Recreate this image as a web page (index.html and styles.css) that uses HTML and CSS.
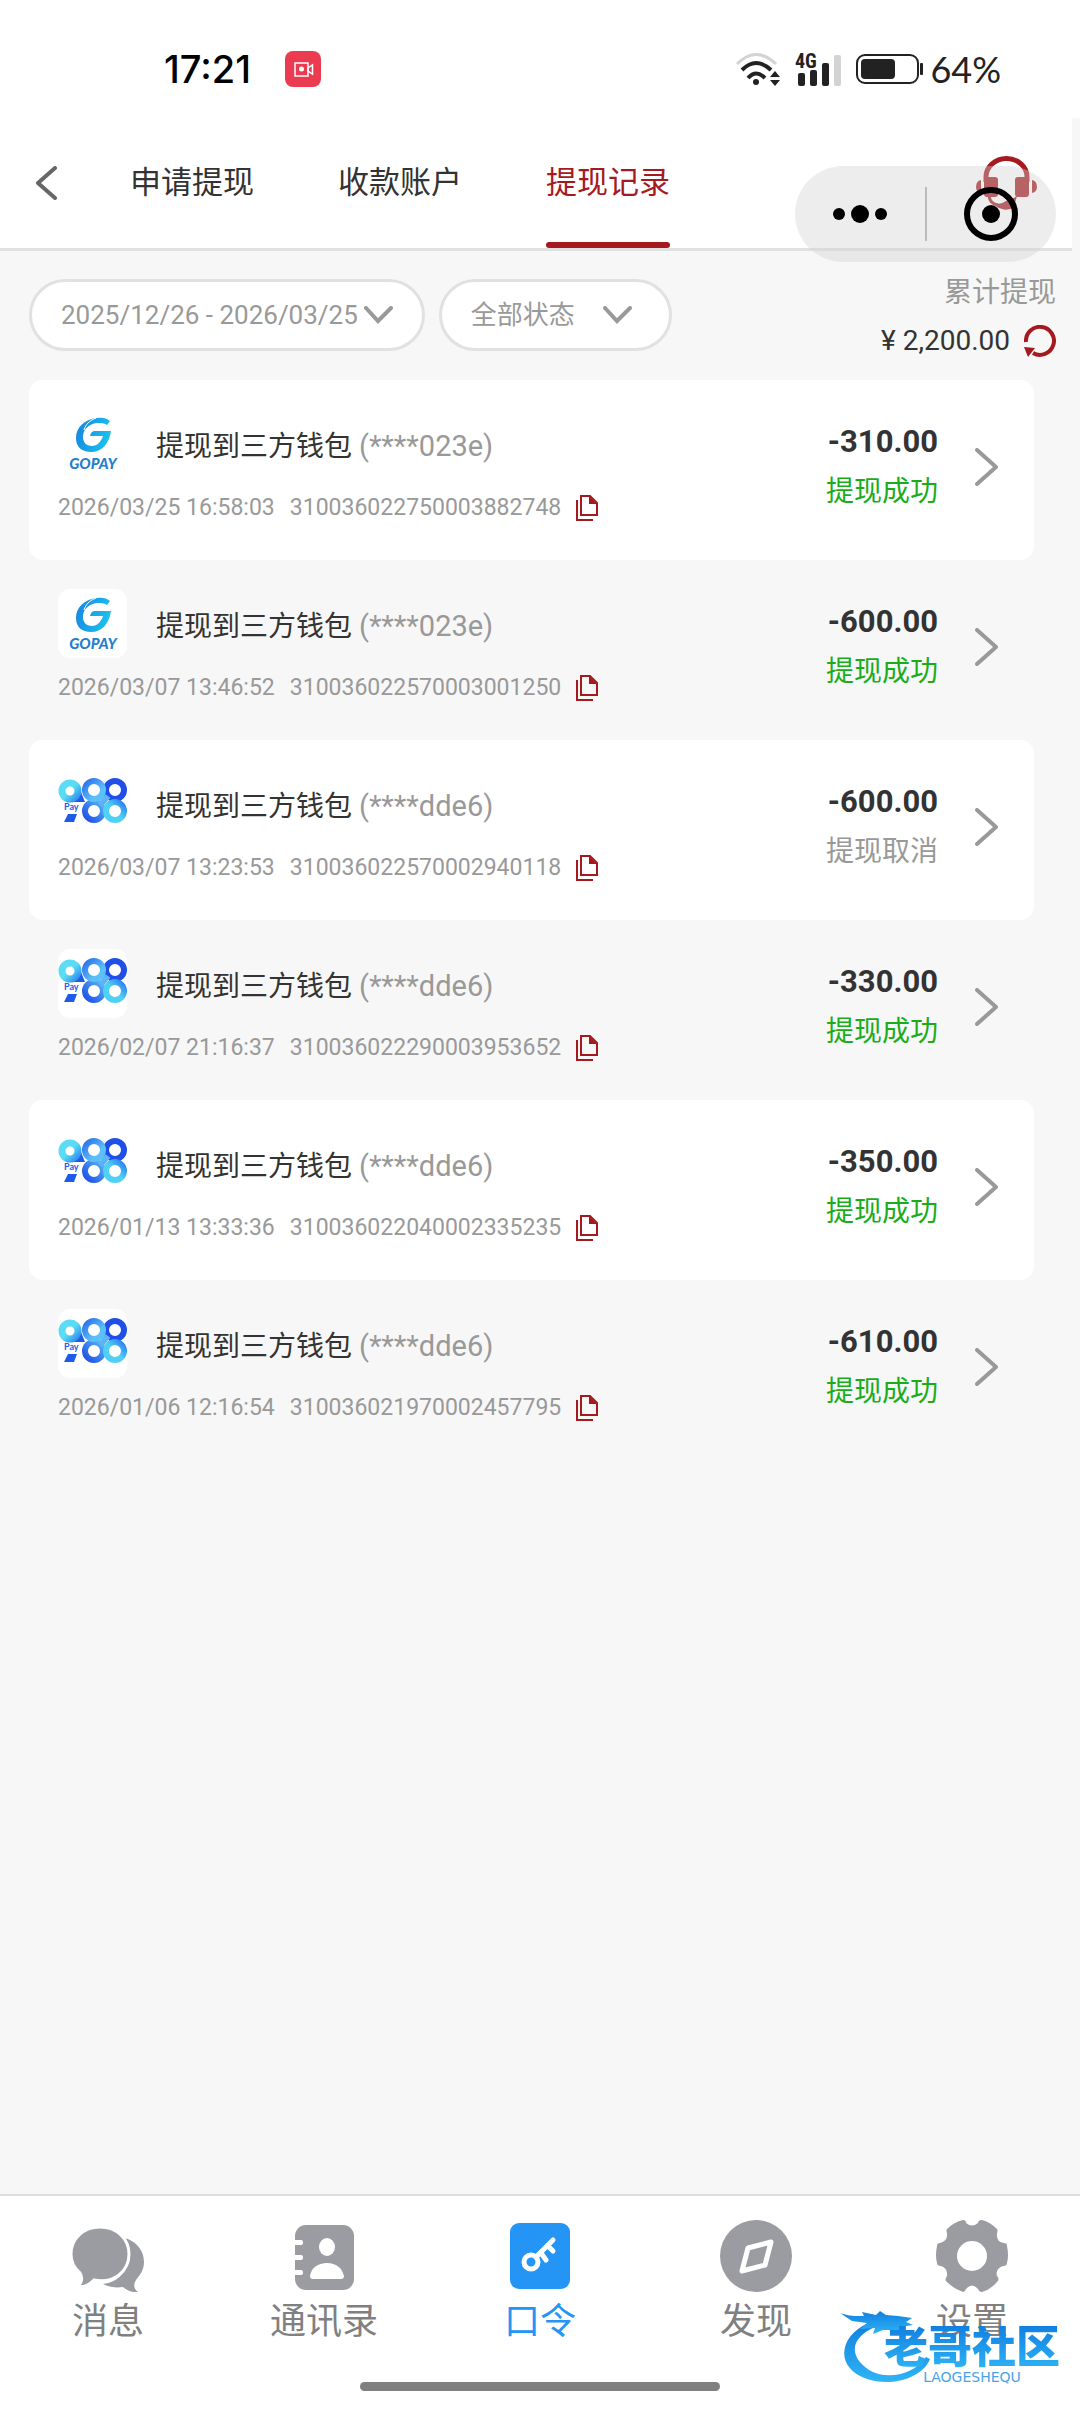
FILE: index.html
```html
<!DOCTYPE html>
<html lang="zh-CN">
<head>
    <meta charset="UTF-8">
    <meta name="viewport" content="width=device-width, initial-scale=1.0">
    <title>提现记录</title>
    <link rel="stylesheet" href="styles.css">
</head>
<body>
    <!-- shared icons -->
    <svg class="sprite" width="0" height="0" aria-hidden="true">
        <defs>
            <linearGradient id="go-fill" x1="0" y1="0.3" x2="1" y2="0.6">
                <stop offset="0" stop-color="#1787e0"/>
                <stop offset="1" stop-color="#1cc4ee"/>
            </linearGradient>
            <linearGradient id="nine-fill" x1="0" y1="0" x2="1" y2="1">
                <stop offset="0.5" stop-color="#5adcf5"/>
                <stop offset="1" stop-color="#2f8cf0"/>
            </linearGradient>
            <linearGradient id="mid-fill" x1="0" y1="0" x2="1" y2="1">
                <stop offset="0" stop-color="#2a70ee"/>
                <stop offset="0.7" stop-color="#5cc0f8"/>
            </linearGradient>
            <linearGradient id="low-fill" x1="0" y1="1" x2="1" y2="0">
                <stop offset="0" stop-color="#1f4fe6"/>
                <stop offset="1" stop-color="#5ab4f7"/>
            </linearGradient>
            <linearGradient id="end-fill" x1="0" y1="1" x2="1" y2="0">
                <stop offset="0.5" stop-color="#4fd0f5"/>
                <stop offset="1" stop-color="#2a7cf0"/>
            </linearGradient>
            <linearGradient id="dragon-fill" x1="0" y1="0" x2="0" y2="1">
                <stop offset="0" stop-color="#1180e0"/>
                <stop offset="1" stop-color="#2fb4f5"/>
            </linearGradient>
        </defs>
        <symbol id="logo-gopay" viewBox="0 0 69 69">
            <path fill="url(#go-fill)" d="M49 16 L52 12 C49 9 44 8 39 9 C26 10 18 19 18 29 C18 38 24 43 33 43 C44 43 51 35 53 22 H37 Q33 22 32 27 H45 C43 33 39 37 34 37 C28 37 25 33 25 28 C25 20 31 15 39 14 C43 14 46 14 49 16Z"/>
            <path fill="none" stroke="#fff" d="M38 9 C31 12 28 15 26 21"/>
        </symbol>
        <symbol id="logo-988" viewBox="0 0 69 69">
            <path fill="#1d5ce8" d="M8 33 C16 33 20 29 23 23 L27 33Z"/>
            <circle cx="12" cy="22" r="8" fill="none" stroke="url(#nine-fill)" stroke-width="7"/>
            <g fill="none" stroke-width="6">
                <circle cx="36" cy="42" r="9" stroke="url(#low-fill)"/>
                <circle cx="57" cy="21" r="9" stroke="#1f4fe6"/>
                <circle cx="57" cy="42" r="9" stroke="url(#end-fill)"/>
                <circle cx="36" cy="21" r="9" stroke="url(#mid-fill)"/>
                <path d="M50 27 C46 32 45 33 42 36" stroke="#5cb4f8"/>
            </g>
            <path fill="#1f5be8" d="M10 45 H19 L16 53 H6Z"/>
        </symbol>
        <symbol id="icon-copy" viewBox="0 0 22 26">
            <g fill="none" stroke="#a51a1e" stroke-width="2">
                <path d="M5 1 H14 L21 8 V20 H5Z"/>
                <path d="M1 5 V25 H17"/>
            </g>
            <path fill="#a51a1e" d="M13 1 L21 9 H13Z"/>
        </symbol>
        <symbol id="icon-right" viewBox="0 0 23 38">
            <path d="M2 2 L21 19 L2 36" fill="none" stroke="#999" stroke-width="4" stroke-linecap="round" stroke-linejoin="round"/>
        </symbol>
        <symbol id="icon-down" viewBox="0 0 29 18">
            <path d="M2 2 L14 15 L27 2" fill="none" stroke="#999" stroke-width="4" stroke-linecap="round"/>
        </symbol>
    </svg>

    <div class="status-bar">
        <span class="status-time">17:21</span>
        <svg class="status-rec" width="36" height="36" viewBox="0 0 36 36">
            <rect width="36" height="36" rx="8" fill="#eb3b50"/>
            <g fill="none" stroke="#fff" stroke-width="1.5">
                <rect x="10" y="12" width="13" height="13"/>
                <path d="M23 17 L27.500 14 V23 L23 20Z"/>
            </g>
            <circle cx="16.500" cy="18" r="2.500" fill="#fff"/>
        </svg>
        <div class="status-right">
            <svg width="44" height="34" viewBox="0 0 44 34">
                <g fill="none" stroke="#222" stroke-width="4">
                    <path d="M1 12 Q20 -7 40 12" stroke="#d3d3d3" stroke-width="3"/>
                    <path d="M6 18 Q20 4 35 18"/>
                    <path d="M12 26 Q20 17 29 26"/>
                </g>
                <circle cx="20" cy="30" r="3" fill="#222"/>
                <path fill="#222" d="M34 25 L39 19 L44 25Z M34 28 L39 34 L44 28Z"/>
            </svg>
            <svg width="46" height="36" viewBox="0 0 46 36">
                <text class="signal-text" x="0" y="17">4G</text>
                <g fill="#222">
                    <rect x="3" y="22" width="7" height="13" rx="2"/>
                    <rect x="15" y="19" width="7" height="16" rx="2"/>
                    <rect x="27" y="12" width="7" height="23" rx="2"/>
                    <rect x="39" y="4" width="7" height="31" rx="2" fill="#d3d3d3"/>
                </g>
            </svg>
            <svg width="67" height="30" viewBox="0 0 67 30">
                <rect x="1" y="1" width="61" height="28" rx="8" fill="none" stroke="#222" stroke-width="2"/>
                <rect x="5" y="5" width="34" height="20" rx="4" fill="#222"/>
                <rect x="64" y="9" width="3" height="12" rx="1" fill="#222"/>
            </svg>
            <span class="status-battery">64%</span>
        </div>
    </div>

    <header class="header">
        <button class="back" aria-label="返回">
            <svg width="21" height="34" viewBox="0 0 21 34"><path d="M19 2 L2 17 L19 32" fill="none" stroke="#666" stroke-width="4" stroke-linecap="round" stroke-linejoin="round"/></svg>
        </button>
        <nav class="tabs">
            <a class="tab" href="#apply">申请提现</a>
            <a class="tab" href="#account">收款账户</a>
            <a class="tab active" href="#record">提现记录</a>
        </nav>
        <button class="service" aria-label="客服">
            <svg width="61" height="54" viewBox="0 0 61 54" fill="#a51a1e">
                <path d="M10 26 V21 A20 18 0 0 1 51 21 V26" fill="none" stroke="#a51a1e" stroke-width="5"/>
                <rect x="8" y="21" width="14" height="20" rx="3"/>
                <rect x="39" y="21" width="14" height="20" rx="3"/>
                <path d="M5 24 Q0 25 0 31 Q0 36 5 37Z M56 24 Q61 25 61 31 Q61 36 56 37Z"/>
                <path d="M13 40 Q14 48 22 49" fill="none" stroke="#a51a1e" stroke-width="3"/>
                <path d="M20 47 Q24 49 30 45 Q37 43 41 40 L38 51 Q30 57 20 50Z"/>
            </svg>
        </button>
    </header>

    <!-- mini program capsule -->
    <div class="capsule">
        <button class="capsule-btn" aria-label="更多">
            <svg width="54" height="18" viewBox="0 0 54 18"><circle cx="6" cy="9" r="6"/><circle cx="27" cy="9" r="9"/><circle cx="48" cy="9" r="6"/></svg>
        </button>
        <span class="capsule-line"></span>
        <button class="capsule-btn" aria-label="关闭">
            <svg width="54" height="54" viewBox="0 0 54 54"><circle cx="27" cy="27" r="24" fill="none" stroke="#000" stroke-width="6"/><circle cx="27" cy="27" r="9"/></svg>
        </button>
    </div>

    <main class="content">
        <div class="filter-bar">
            <button class="pill date-pill">
                <span>2025/12/26 - 2026/03/25</span>
                <svg width="29" height="18"><use href="#icon-down"/></svg>
            </button>
            <div class="pill">
                <select class="state-select" aria-label="状态">
                    <option>全部状态</option>
                    <option>提现成功</option>
                    <option>提现取消</option>
                </select>
                <svg width="29" height="18"><use href="#icon-down"/></svg>
            </div>
            <div class="total">
                <span class="total-label">累计提现</span>
                <div class="total-row">
                    <span>¥ 2,200.00</span>
                    <button class="refresh" aria-label="刷新">
                        <svg width="32" height="32" viewBox="0 0 32 32"><path d="M2 17 A14 14 0 1 1 9 28" fill="none" stroke="#a51a1e" stroke-width="4"/><path d="M0 22 L11 23 L4 32Z" fill="#a51a1e"/></svg>
                    </button>
                </div>
            </div>
        </div>

        <ul class="records">
            <li class="record">
                <div class="record-main">
                    <div class="record-title">
                        <svg class="logo" viewBox="0 0 69 69"><use href="#logo-gopay"/><text class="gopay-text" x="35" y="60">GOPAY</text></svg>
                        <span>提现到三方钱包 <em>(****023e)</em></span>
                    </div>
                    <div class="record-meta">
                        <time>2026/03/25 16:58:03</time>
                        <span>310036022750003882748</span>
                        <button class="copy" aria-label="复制"><svg width="22" height="26"><use href="#icon-copy"/></svg></button>
                    </div>
                </div>
                <div class="record-amount">
                    <strong>-310.00</strong>
                    <span class="state success">提现成功</span>
                </div>
                <svg width="23" height="38"><use href="#icon-right"/></svg>
            </li>
            <li class="record">
                <div class="record-main">
                    <div class="record-title">
                        <svg class="logo" viewBox="0 0 69 69"><use href="#logo-gopay"/><text class="gopay-text" x="35" y="60">GOPAY</text></svg>
                        <span>提现到三方钱包 <em>(****023e)</em></span>
                    </div>
                    <div class="record-meta">
                        <time>2026/03/07 13:46:52</time>
                        <span>310036022570003001250</span>
                        <button class="copy" aria-label="复制"><svg width="22" height="26"><use href="#icon-copy"/></svg></button>
                    </div>
                </div>
                <div class="record-amount">
                    <strong>-600.00</strong>
                    <span class="state success">提现成功</span>
                </div>
                <svg width="23" height="38"><use href="#icon-right"/></svg>
            </li>
            <li class="record">
                <div class="record-main">
                    <div class="record-title">
                        <svg class="logo" viewBox="0 0 69 69"><use href="#logo-988"/><text class="pay-text" x="6" y="41">Pay</text></svg>
                        <span>提现到三方钱包 <em>(****dde6)</em></span>
                    </div>
                    <div class="record-meta">
                        <time>2026/03/07 13:23:53</time>
                        <span>310036022570002940118</span>
                        <button class="copy" aria-label="复制"><svg width="22" height="26"><use href="#icon-copy"/></svg></button>
                    </div>
                </div>
                <div class="record-amount">
                    <strong>-600.00</strong>
                    <span class="state">提现取消</span>
                </div>
                <svg width="23" height="38"><use href="#icon-right"/></svg>
            </li>
            <li class="record">
                <div class="record-main">
                    <div class="record-title">
                        <svg class="logo" viewBox="0 0 69 69"><use href="#logo-988"/><text class="pay-text" x="6" y="41">Pay</text></svg>
                        <span>提现到三方钱包 <em>(****dde6)</em></span>
                    </div>
                    <div class="record-meta">
                        <time>2026/02/07 21:16:37</time>
                        <span>310036022290003953652</span>
                        <button class="copy" aria-label="复制"><svg width="22" height="26"><use href="#icon-copy"/></svg></button>
                    </div>
                </div>
                <div class="record-amount">
                    <strong>-330.00</strong>
                    <span class="state success">提现成功</span>
                </div>
                <svg width="23" height="38"><use href="#icon-right"/></svg>
            </li>
            <li class="record">
                <div class="record-main">
                    <div class="record-title">
                        <svg class="logo" viewBox="0 0 69 69"><use href="#logo-988"/><text class="pay-text" x="6" y="41">Pay</text></svg>
                        <span>提现到三方钱包 <em>(****dde6)</em></span>
                    </div>
                    <div class="record-meta">
                        <time>2026/01/13 13:33:36</time>
                        <span>310036022040002335235</span>
                        <button class="copy" aria-label="复制"><svg width="22" height="26"><use href="#icon-copy"/></svg></button>
                    </div>
                </div>
                <div class="record-amount">
                    <strong>-350.00</strong>
                    <span class="state success">提现成功</span>
                </div>
                <svg width="23" height="38"><use href="#icon-right"/></svg>
            </li>
            <li class="record">
                <div class="record-main">
                    <div class="record-title">
                        <svg class="logo" viewBox="0 0 69 69"><use href="#logo-988"/><text class="pay-text" x="6" y="41">Pay</text></svg>
                        <span>提现到三方钱包 <em>(****dde6)</em></span>
                    </div>
                    <div class="record-meta">
                        <time>2026/01/06 12:16:54</time>
                        <span>310036021970002457795</span>
                        <button class="copy" aria-label="复制"><svg width="22" height="26"><use href="#icon-copy"/></svg></button>
                    </div>
                </div>
                <div class="record-amount">
                    <strong>-610.00</strong>
                    <span class="state success">提现成功</span>
                </div>
                <svg width="23" height="38"><use href="#icon-right"/></svg>
            </li>
        </ul>
    </main>

    <footer class="footer">
        <nav class="tabbar">
            <a class="tabbar-item" href="#message">
                <svg width="72" height="72" viewBox="0 0 72 72" fill="#9b9ca2">
                    <path d="M53 18 C66 22 72 32 72 42 C72 50 68 55 64 60 C61 65 62 69 66 72 C60 73 54 70 51 67 C43 68 37 67 31 64 C52 62 62 42 53 18Z"/>
                    <path stroke="#fff" stroke-width="3" d="M28 7 C45 7 57 19 57 34 C57 51 42 64 22 60 C18 64 13 68 6 66 C10 62 11 58 8 53 C2 48 -1 42 -1 34 C-1 19 11 7 28 7Z"/>
                </svg>
                <span>消息</span>
            </a>
            <a class="tabbar-item" href="#contacts">
                <svg width="72" height="72" viewBox="0 0 72 72" fill="#fff">
                    <rect x="7" y="5" width="59" height="65" rx="11" fill="#9b9ca2"/>
                    <rect x="3" y="20" width="12" height="5" rx="2"/>
                    <rect x="3" y="35" width="12" height="5" rx="2"/>
                    <rect x="3" y="50" width="12" height="5" rx="2"/>
                    <ellipse cx="39" cy="27" rx="8" ry="9"/>
                    <path d="M22 56 C23 48 30 43 39 43 C48 43 54 48 56 56 Q56 59 53 59 H25 Q22 59 22 56Z"/>
                </svg>
                <span>通讯录</span>
            </a>
            <a class="tabbar-item active" href="#key">
                <svg width="72" height="72" viewBox="0 0 72 72">
                    <rect x="6" y="3" width="60" height="66" rx="9" fill="#2494f5"/>
                    <g fill="none" stroke="#fff" stroke-width="5" stroke-linecap="round">
                        <circle cx="27" cy="42" r="7"/>
                        <path d="M32 37 L49 20 M37 33 L42 40 M44 26 L49 31"/>
                    </g>
                </svg>
                <span>口令</span>
            </a>
            <a class="tabbar-item" href="#discover">
                <svg width="72" height="72" viewBox="0 0 72 72">
                    <circle cx="36" cy="36" r="36" fill="#9b9ca2"/>
                    <path d="M28 28 L51 22 L45 45 L22 51Z" fill="none" stroke="#fff" stroke-width="5" stroke-linejoin="round"/>
                </svg>
                <span>发现</span>
            </a>
            <a class="tabbar-item" href="#settings">
                <svg width="72" height="72" viewBox="0 0 72 72">
                    <path fill="#9b9ca2" d="M27 0 Q30 0 30 3 Q36 8 42 3 Q42 0 46 0 Q54 2 61 9 Q62 11 61 13 Q60 22 68 23 Q71 23 71 26 Q73 36 71 43 Q71 46 67 46 Q59 49 61 56 Q64 59 61 62 Q54 70 46 72 Q43 72 42 69 Q36 62 30 69 Q29 72 27 72 Q18 69 11 62 Q8 60 11 56 Q12 48 5 46 Q1 46 1 43 Q-1 36 1 26 Q1 23 4 23 Q12 21 11 13 Q10 11 11 9 Q18 2 27 0Z"/>
                    <circle cx="36" cy="36" r="15" fill="#fff"/>
                </svg>
                <span>设置</span>
            </a>
        </nav>
        <div class="home-bar"></div>
    </footer>

    <div class="watermark">
        <svg width="92" height="74" viewBox="0 0 92 74" fill="url(#dragon-fill)">
            <path d="M28 13 C-2 27 -5 58 27 69 C50 77 82 69 90 49 L86 47 C73 66 45 70 29 60 C8 46 10 27 37 16Z"/>
            <path d="M0 3 C12 7 18 6 24 6 L22 2 L36 5 L40 1 L46 5 L58 6 L72 8 L66 12 L73 15 L60 17 L66 22 L53 20 L43 20 L33 24 L35 18 L20 19 L27 13 L12 11Z"/>
        </svg>
        <div class="watermark-text">
            <b>老哥社区</b>
            <small>LAOGESHEQU</small>
        </div>
    </div>
</body>
</html>
```
FILE: styles.css
```css
:root {
    --background: #f7f7f7;
    --accent: #a51a1e;
    --text: #333333;
    --muted: #999999;
    --border: #e1e1e1;
    --success: #1aad19;
    --blue: #2494f5;
}

* {
    box-sizing: border-box;
}

body {
    font-family: Roboto, "Noto Sans CJK SC", sans-serif;
    background-color: var(--background);
    color: var(--text);
    margin: 0;
    min-height: 100vh;
    display: flex;
    flex-direction: column;
    position: relative;
}

button,
select {
    font: inherit;
    color: inherit;
    background: none;
    border: none;
    padding: 0;
    margin: 0;
    appearance: none;
    cursor: pointer;
}

a {
    color: inherit;
    text-decoration: none;
}

svg {
    display: block;
    flex: none;
}

.sprite {
    position: absolute;
}

.gopay-text {
    font: italic 900 15px Lato, sans-serif;
    fill: #1f7fcf;
    text-anchor: middle;
}

.pay-text {
    font: bold 9px Lato, sans-serif;
    fill: #1f5be8;
}

/* status bar */
.status-bar {
    display: flex;
    align-items: center;
    height: 118px;
    padding: 20px 79px 0 164px;
    background-color: #fff;
}

.status-time {
    font: 500 38px Inter, sans-serif;
    color: #000;
}

.status-rec {
    margin-left: 34px;
}

.status-right {
    margin-left: auto;
    display: flex;
    align-items: center;
    gap: 15px;
}

.signal-text {
    font: bold 20px "Roboto Condensed", Roboto, sans-serif;
    fill: #222;
}

.status-battery {
    font: 36px Lato, sans-serif;
    color: #222;
    margin-left: -8px;
}

/* header */
.header {
    display: flex;
    align-items: center;
    margin-right: 8px;
    padding: 0 35px 0 36px;
    background-color: #fff;
    border-bottom: 3px solid var(--border);
}

.tabs {
    display: flex;
    gap: 84px;
    margin-left: 73px;
}

.tab {
    position: relative;
    padding: 43px 0;
    font-size: 31px;
    line-height: 44px;
}

.tab.active {
    color: var(--accent);
}

.tab.active::after {
    content: '';
    position: absolute;
    left: 0;
    bottom: 0;
    width: 100%;
    height: 6px;
    border-radius: 3px;
    background-color: var(--accent);
}

.service {
    margin-left: auto;
}

.capsule {
    position: absolute;
    top: 166px;
    right: 24px;
    width: 261px;
    height: 96px;
    border-radius: 48px;
    background-color: rgba(210, 210, 210, 0.4);
    display: flex;
    align-items: center;
}

.capsule-btn {
    flex: 1;
    display: flex;
    justify-content: center;
}

.capsule-line {
    width: 2px;
    height: 54px;
    background-color: #bbb;
}

/* filters */
.content {
    flex: 1;
}

.filter-bar {
    display: flex;
    align-items: center;
    gap: 14px;
    padding: 14px 24px 15px 29px;
}

.pill {
    display: flex;
    align-items: center;
    height: 72px;
    padding: 0 37px 0 29px;
    border: 3px solid var(--border);
    border-radius: 36px;
    background-color: #fff;
    color: var(--muted);
    font-size: 26px;
}

.date-pill {
    gap: 6px;
    padding-right: 29px;
}

.state-select {
    width: 132px;
}

.total {
    margin-left: auto;
    padding-top: 4px;
    text-align: right;
    font-size: 28px;
    line-height: 48px;
}

.total-label {
    color: var(--muted);
}

.total-row {
    display: flex;
    align-items: center;
    justify-content: flex-end;
    gap: 14px;
}

/* records */
.records {
    list-style: none;
    margin: 0 46px 0 29px;
    padding: 0;
}

.record {
    display: flex;
    align-items: center;
    padding: 29px 36px 36px 29px;
    border-radius: 14px;
}

.record:nth-child(odd) {
    background-color: #fff;
}

.record-main {
    flex: 1;
}

.record-title {
    display: flex;
    align-items: center;
    gap: 29px;
    font-size: 28px;
}

.record-title em {
    font-size: 29px;
    font-style: normal;
    color: var(--muted);
}

.logo {
    width: 69px;
    height: 69px;
    border-radius: 12px;
    background-color: #fff;
}

.record-meta {
    display: flex;
    align-items: center;
    gap: 15px;
    margin-top: 14px;
    font-size: 23px;
    line-height: 32px;
    color: var(--muted);
}

.record-amount {
    display: flex;
    flex-direction: column;
    align-items: flex-end;
    gap: 2px;
    margin-right: 37px;
    line-height: 48px;
}

.record-amount strong {
    font-size: 31px;
}

.state {
    font-size: 28px;
    color: var(--muted);
}

.state.success {
    color: var(--success);
}

/* bottom bar */
.footer {
    background-color: #fff;
    border-top: 2px solid #dcdcdc;
    padding: 24px 0 21px;
}

.tabbar {
    display: flex;
}

.tabbar-item {
    flex: 1;
    display: flex;
    flex-direction: column;
    align-items: center;
    gap: 8px;
    font-size: 36px;
    line-height: 44px;
    color: #808080;
}

.tabbar-item.active {
    color: var(--blue);
}

.home-bar {
    width: 33.3333%;
    height: 9px;
    margin: 38px auto 0;
    border-radius: 5px;
    background-color: #808080;
}

.watermark {
    position: absolute;
    right: 20px;
    bottom: 28px;
    display: flex;
    align-items: flex-end;
    pointer-events: none;
}

.watermark-text {
    display: flex;
    flex-direction: column;
    align-items: center;
    margin-left: -48px;
    line-height: 44px;
}

.watermark-text b {
    font-size: 44px;
    font-weight: 900;
    color: transparent;
    background: linear-gradient(#1180e0, #2fb4f5);
    background-clip: text;
    -webkit-background-clip: text;
}

.watermark-text small {
    font: 14px/14px "DejaVu Sans", sans-serif;
    color: #4aa3e8;
}
```
